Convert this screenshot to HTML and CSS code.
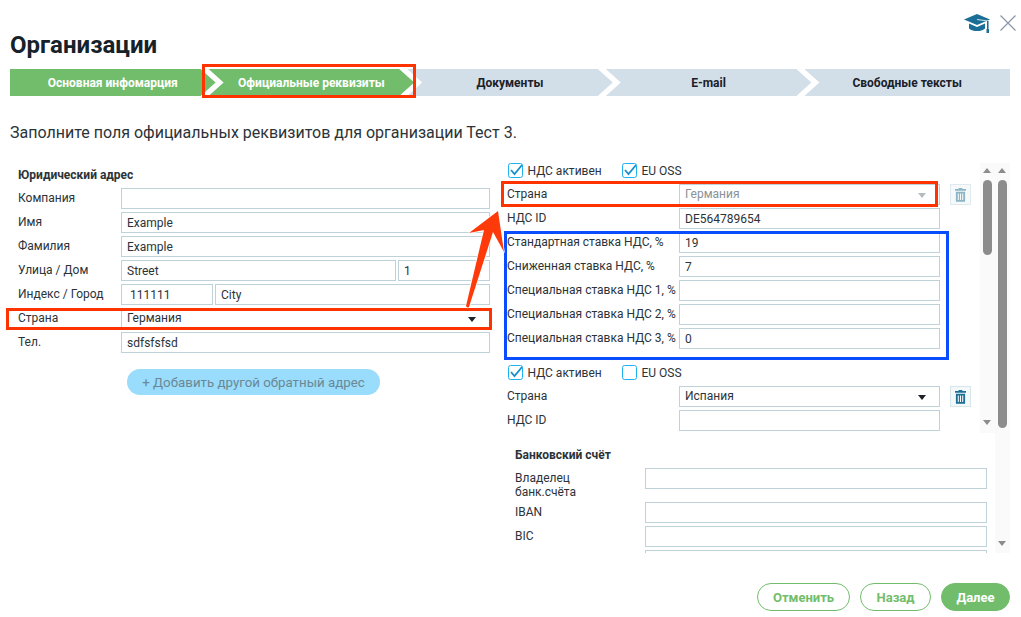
FILE: index.html
```html
<!DOCTYPE html>
<html lang="ru">
<head>
<meta charset="utf-8">
<title>Организации</title>
<link rel="stylesheet" href="styles.css">
</head>
<body>
<div class="page">
  <div class="top-icons">
    <svg class="cap" viewBox="0 0 26 20"><path d="M13 1 26 6.500 13 12 0 6.500z" fill="#1b6f96"/><path d="M5 10.500 13 14 21 10.500V15.500C19 17.500 16 18 13 18S7 17.500 5 15.500z" fill="#1b6f96"/><path d="M13 6.500 24 8V15" fill="none" stroke="#cfe0e8" stroke-width="1"/><rect x="23" y="8" width="1.500" height="9" fill="#1b6f96"/><rect x="22.500" y="16" width="2.500" height="4" fill="#1b6f96"/></svg>
    <svg class="close" viewBox="0 0 16 16"><path d="M.5.500 15.500 15.500M15.500.500.500 15.500" fill="none" stroke="#8b98ad" stroke-width="1.300"/></svg>
  </div>
  <h1 class="title">Организации</h1>
  <div class="steps">
    <div class="step first done">Основная инфомарция</div>
    <div class="step done">Официальные реквизиты</div>
    <div class="step">Документы</div>
    <div class="step">E-mail</div>
    <div class="step last">Свободные тексты</div>
  </div>
  <p class="intro">Заполните поля официальных реквизитов для организации Тест 3.</p>
  <div class="columns">
    <section class="left">
      <h2 class="heading">Юридический адрес</h2>
      <div class="row"><span class="label">Компания</span><div class="field"></div></div>
      <div class="row"><span class="label">Имя</span><div class="field">Example</div></div>
      <div class="row"><span class="label">Фамилия</span><div class="field">Example</div></div>
      <div class="row"><span class="label">Улица / Дом</span><div class="field">Street</div><div class="field house">1</div></div>
      <div class="row"><span class="label">Индекс / Город</span><div class="field zip">111111</div><div class="field">City</div></div>
      <div class="row"><span class="label">Страна</span><div class="field select">Германия<i class="caret"></i></div></div>
      <div class="row"><span class="label">Тел.</span><div class="field">sdfsfsfsd</div></div>
      <button class="add" type="button">+ Добавить другой обратный адрес</button>
    </section>
    <section class="right">
      <div class="right-inner">
        <div class="vat-scroll">
          <div class="vat-list">
            <div class="vat-group">
              <div class="checks">
                <label class="check"><svg class="box" viewBox="0 0 15 15"><rect x=".5" y=".5" width="14" height="14" rx="2" fill="none" stroke="#1fb2f2"/><path d="M3 7 6.500 11 14 2" fill="none" stroke="#1a8fc9" stroke-width="1.800"/></svg>НДС активен</label>
                <label class="check"><svg class="box" viewBox="0 0 15 15"><rect x=".5" y=".5" width="14" height="14" rx="2" fill="none" stroke="#1fb2f2"/><path d="M3 7 6.500 11 14 2" fill="none" stroke="#1a8fc9" stroke-width="1.800"/></svg>EU OSS</label>
              </div>
              <div class="vat-row"><span class="vat-label">Страна</span><div class="field select disabled">Германия<i class="caret"></i></div><div class="trash off"><svg viewBox="0 0 12 16"><path d="M4 2V1H8V2H12V4H0V2zM1 5H11V16H1zM3 7V14H4.200V7zM5.400 7V14H6.600V7zM7.800 7V14H9V7z" fill="#6fa3b8" fill-rule="evenodd"/></svg></div></div>
              <div class="vat-row"><span class="vat-label">НДС ID</span><div class="field">DE564789654</div></div>
              <div class="vat-row"><span class="vat-label">Стандартная ставка НДС, %</span><div class="field">19</div></div>
              <div class="vat-row"><span class="vat-label">Сниженная ставка НДС, %</span><div class="field">7</div></div>
              <div class="vat-row"><span class="vat-label">Специальная ставка НДС 1, %</span><div class="field"></div></div>
              <div class="vat-row"><span class="vat-label">Специальная ставка НДС 2, %</span><div class="field"></div></div>
              <div class="vat-row"><span class="vat-label">Специальная ставка НДС 3, %</span><div class="field">0</div></div>
            </div>
            <div class="vat-group">
              <div class="checks">
                <label class="check"><svg class="box" viewBox="0 0 15 15"><rect x=".5" y=".5" width="14" height="14" rx="2" fill="none" stroke="#1fb2f2"/><path d="M3 7 6.500 11 14 2" fill="none" stroke="#1a8fc9" stroke-width="1.800"/></svg>НДС активен</label>
                <label class="check"><svg class="box" viewBox="0 0 15 15"><rect x=".5" y=".5" width="14" height="14" rx="2" fill="none" stroke="#1fb2f2"/></svg>EU OSS</label>
              </div>
              <div class="vat-row"><span class="vat-label">Страна</span><div class="field select">Испания<i class="caret"></i></div><div class="trash"><svg viewBox="0 0 12 16"><path d="M4 2V1H8V2H12V4H0V2zM1 5H11V16H1zM3 7V14H4.200V7zM5.400 7V14H6.600V7zM7.800 7V14H9V7z" fill="#1b6f96" fill-rule="evenodd"/></svg></div></div>
              <div class="vat-row"><span class="vat-label">НДС ID</span><div class="field"></div></div>
            </div>
          </div>
          <div class="scrollbar inner-bar"><i class="arrow up"></i><i class="thumb"></i><i class="arrow down"></i></div>
        </div>
        <div class="bank">
          <h2 class="heading">Банковский счёт</h2>
          <div class="bank-row tall"><span class="bank-label">Владелец<br>банк.счёта</span><div class="field"></div></div>
          <div class="bank-row"><span class="bank-label">IBAN</span><div class="field"></div></div>
          <div class="bank-row"><span class="bank-label">BIC</span><div class="field"></div></div>
          <div class="bank-row"><span class="bank-label"></span><div class="field"></div></div>
        </div>
      </div>
      <div class="scrollbar outer-bar"><i class="arrow up"></i><i class="thumb"></i><i class="arrow down"></i></div>
    </section>
  </div>
  <div class="footer">
    <button class="btn" type="button">Отменить</button>
    <button class="btn" type="button">Назад</button>
    <button class="btn primary" type="button">Далее</button>
  </div>
</div>
<div class="mark red mark-step"></div>
<div class="mark red mark-left"></div>
<div class="mark red mark-right"></div>
<div class="mark blue mark-rates"></div>
<svg class="pointer" viewBox="0 0 50 105"><path d="M37 3 8 25 23 22 5 98Q6.500 100.500 8 99L32 24 43 44z" fill="#ff3a0a" stroke="#fff" stroke-width="1.500" stroke-linejoin="round" paint-order="stroke"/></svg>
</body>
</html>
```

FILE: styles.css
```css
* { box-sizing: border-box; }
html, body { margin: 0; height: 617px; overflow: hidden; background: #fff; }
body { font-family: Roboto, "Liberation Sans", sans-serif; font-size: 12px; color: #2b3338; position: relative; }
.page { padding: 14px 11px 0 10px; }
.top-icons { display: flex; justify-content: flex-end; align-items: center; gap: 10px; height: 18px; margin-right: -6px; }
.cap { width: 26px; height: 20px; }
.close { width: 16px; height: 16px; }
.title { margin: 0; font-size: 24px; line-height: 26px; font-weight: 700; color: #17212a; }
.steps { display: flex; margin-top: 11px; height: 27px; width: 1000px; }
.step { flex: 1 1 0; margin-left: -7px; height: 27px; display: flex; align-items: center; justify-content: center; font-weight: 700; font-size: 12px; color: #1a2029; background: #d3dfe8;
  clip-path: polygon(0 0, calc(100% - 15px) 0, 100% 50%, calc(100% - 15px) 100%, 0 100%, 15px 50%); }
.step.first { margin-left: 0; clip-path: polygon(0 0, calc(100% - 15px) 0, 100% 50%, calc(100% - 15px) 100%, 0 100%); }
.step.last { clip-path: polygon(0 0, 100% 0, 100% 100%, 0 100%, 15px 50%); }
.step.done { background: #72bd6b; color: #fff; }
.intro { margin: 26px 0 0; font-size: 16px; line-height: 22px; color: #2b3338; }
.columns { display: flex; margin-top: 19px; height: 390px; }
.left { width: 480px; padding: 5px 0 0 8px; flex: none; }
.heading { margin: 0; font-size: 12px; line-height: 14px; font-weight: 700; color: #2b3338; }
.left .heading { margin-bottom: 6px; }
.row { display: flex; gap: 2px; height: 21px; margin-bottom: 3px; }
.label { width: 103px; flex: none; margin-right: -2px; font-size: 12px; line-height: 21px; }
.field { flex: 1 1 0; min-width: 0; height: 21px; border: 1px solid #bfd2da; background: #fff; padding: 0 5px; font-size: 12px; line-height: 20px; color: #2b3338; position: relative; }
.field.select { line-height: 18px; }
.house { flex: 0 0 92px; }
.zip { flex: 0 0 92px; padding-left: 8px; }
.caret { position: absolute; right: 13px; top: 8px; border: 4px solid transparent; border-top: 5px solid #1c2227; border-bottom: 0; }
.select.disabled { color: #8a9296; }
.select.disabled .caret { border-top-color: #b5bcc0; }
.add { display: block; width: 253px; height: 26px; margin: 16px 0 0 109px; border: 0; border-radius: 13px; background: #99dcfb; color: #6a8896; font: 400 13.300px Roboto, sans-serif; }
.right { margin-left: 13px; width: 507px; flex: none; display: flex; position: relative; }
.right-inner { width: 492px; height: 390px; overflow: hidden; flex: none; }
.vat-scroll { display: flex; height: 270px; }
.vat-list { width: 477px; flex: none; padding: 0 0 0 4px; }
.vat-group { margin-bottom: 16px; }
.checks { display: flex; height: 15px; margin: 0 0 6px 1px; }
.check { display: flex; align-items: flex-start; gap: 4.500px; width: 114px; font-size: 12px; line-height: 17px; }
.box { width: 15px; height: 15px; flex: none; }
.vat-row { display: flex; height: 21px; margin-bottom: 3px; }
.vat-label { width: 172px; flex: none; font-size: 12px; line-height: 21px; white-space: nowrap; }
.vat-row .field { flex: 0 0 261px; }
.trash { width: 21px; height: 21px; margin-left: 10px; flex: none; border: 1px solid #d8e6ea; background: #f3f8fa; display: flex; align-items: center; justify-content: center; }
.trash svg { width: 11px; height: 15px; }
.trash.off { opacity: .8; }
.scrollbar { position: relative; flex: none; width: 15px; background: #fafafa; }
.inner-bar { height: 270px; }
.outer-bar { height: 390px; }
.thumb { position: absolute; left: 3px; top: 17px; width: 9px; border-radius: 5px; background: #8c8c8c; }
.inner-bar .thumb { height: 75px; }
.outer-bar .thumb { height: 248px; }
.arrow { position: absolute; left: 3px; border: 4.500px solid transparent; }
.arrow.up { top: 5px; border-top: 0; border-bottom: 5px solid #8c8c8c; }
.arrow.down { border-bottom: 0; border-top: 5px solid #8c8c8c; }
.inner-bar .arrow.down { bottom: 8px; }
.outer-bar .arrow.down { bottom: 7px; }
.bank { padding: 15px 0 0 12px; }
.bank .heading { margin-bottom: 6px; }
.bank-row { display: flex; margin-bottom: 3px; height: 21px; }
.bank-row.tall { height: 31px; }
.bank-label { width: 130px; flex: none; font-size: 12px; line-height: 14px; padding-top: 3px; }
.bank-row .field { flex: 0 0 342px; }
.footer { display: flex; justify-content: flex-end; gap: 10px; margin-top: 30px; }
.btn { height: 28px; border: 1px solid #72bd6b; border-radius: 14px; background: #fff; color: #72bd6b; font: 700 13px Roboto, sans-serif; padding: 0; width: 93px; }
.btn:nth-child(2) { width: 71px; }
.btn.primary { width: 69px; background: #72bd6b; color: #fff; }
.mark { position: absolute; border: 3px solid; pointer-events: none; }
.red { border-color: #ff3300; }
.blue { border-color: #0a4dff; }
.mark-step { left: 202px; top: 64px; width: 214px; height: 34px; }
.mark-left { left: 6px; top: 308px; width: 486px; height: 22px; }
.mark-right { left: 501px; top: 181px; width: 437px; height: 26px; }
.mark-rates { left: 504px; top: 231px; width: 445px; height: 129px; }
.pointer { position: absolute; left: 461px; top: 208px; width: 50px; height: 105px; }
```
